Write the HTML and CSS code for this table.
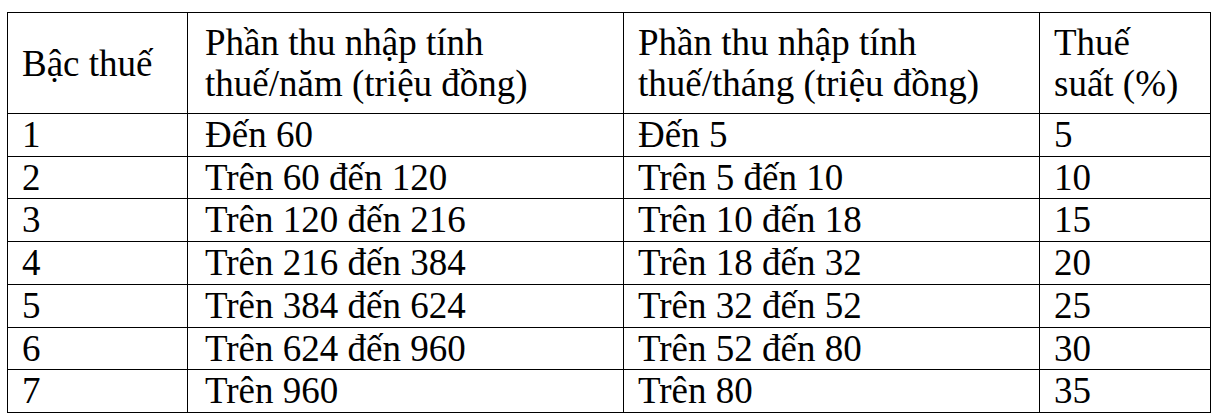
FILE: index.html
```html
<!DOCTYPE html>
<html lang="vi">
<head>
<meta charset="utf-8">
<title>Biểu thuế lũy tiến từng phần</title>
<link rel="stylesheet" href="styles.css">
</head>
<body>
<table class="tax">
  <colgroup>
    <col class="c1"><col class="c2"><col class="c3"><col class="c4">
  </colgroup>
  <thead>
    <tr class="head">
      <th>Bậc thuế</th>
      <th>Phần thu nhập tính thuế/năm (triệu đồng)</th>
      <th>Phần thu nhập tính thuế/tháng (triệu đồng)</th>
      <th>Thuế suất (%)</th>
    </tr>
  </thead>
  <tbody>
    <tr><td>1</td><td>Đến 60</td><td>Đến 5</td><td>5</td></tr>
    <tr><td>2</td><td>Trên 60 đến 120</td><td>Trên 5 đến 10</td><td>10</td></tr>
    <tr><td>3</td><td>Trên 120 đến 216</td><td>Trên 10 đến 18</td><td>15</td></tr>
    <tr><td>4</td><td>Trên 216 đến 384</td><td>Trên 18 đến 32</td><td>20</td></tr>
    <tr><td>5</td><td>Trên 384 đến 624</td><td>Trên 32 đến 52</td><td>25</td></tr>
    <tr><td>6</td><td>Trên 624 đến 960</td><td>Trên 52 đến 80</td><td>30</td></tr>
    <tr><td>7</td><td>Trên 960</td><td>Trên 80</td><td>35</td></tr>
  </tbody>
</table>
</body>
</html>
```
FILE: styles.css
```css
html, body {
  margin: 0;
  padding: 0;
  background: #fff;
}
body {
  padding: 12px 0 0 7px;
  font-family: "Liberation Serif", "DejaVu Serif", serif;
  color: #000;
}
.tax {
  border-collapse: collapse;
  table-layout: fixed;
  width: 1203px;
  font-family: "Liberation Serif", "DejaVu Serif", serif;
  font-size: 37px;
}
.c1 { width: 180px; }
.c2 { width: 436px; }
.c3 { width: 416px; }
.c4 { width: 171px; }
.tax th,
.tax td {
  border: 1px solid #000;
  text-align: left;
  font-weight: normal;
  vertical-align: middle;
  padding: 0 14px;
  line-height: 41.7px;
}
.tax td:nth-child(2),
.tax th:nth-child(2) {
  padding-left: 17px;
}
.tax th {
  padding-top: 9px;
  padding-bottom: 9px;
  line-height: 41px;
}
```
